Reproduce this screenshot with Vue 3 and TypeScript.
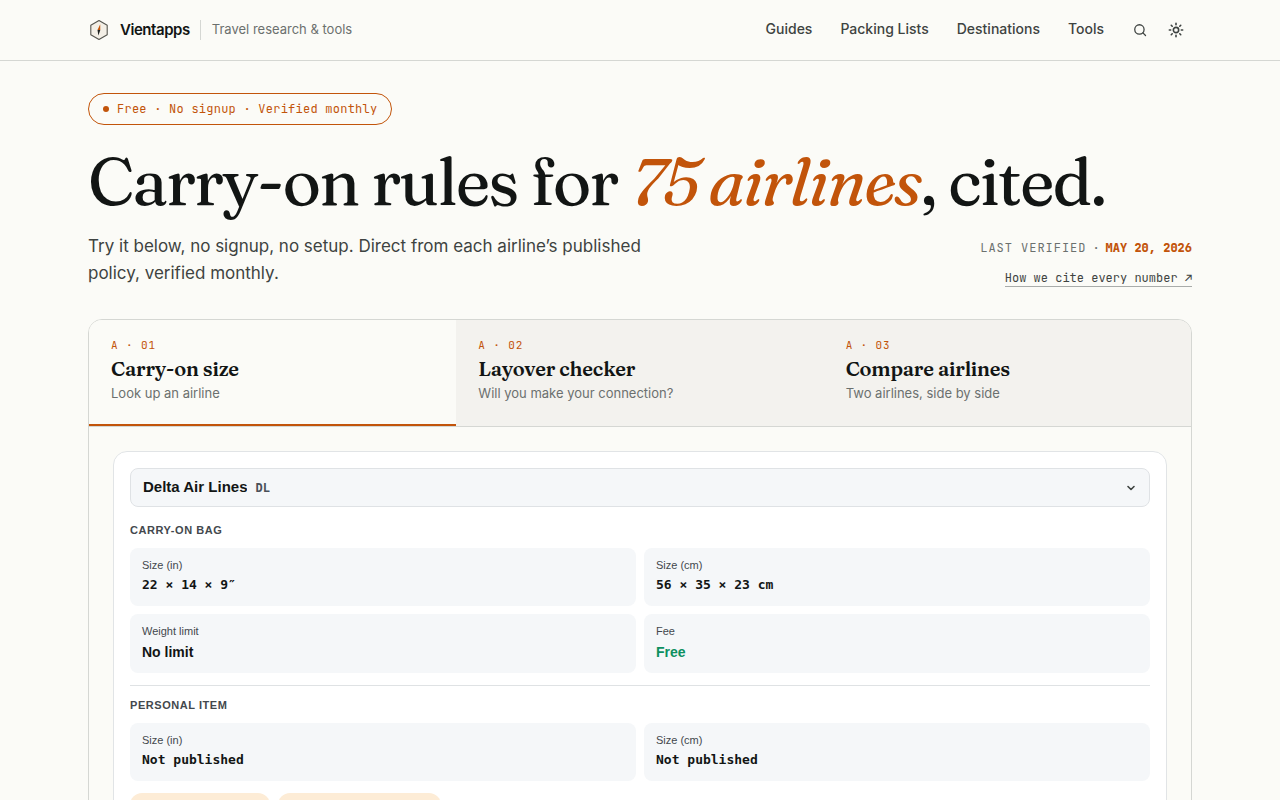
<script setup lang="ts">
import { ref } from 'vue'

interface Tab { id: string; index: string; title: string; hint: string }
interface Fact { label: string; value: string; kind: 'mono' | 'plain' | 'free' }
interface Section { title: string; facts: Fact[] }

const navLinks: string[] = ['Guides', 'Packing Lists', 'Destinations', 'Tools']

const tabs: Tab[] = [
  { id: 'size', index: 'A · 01', title: 'Carry-on size', hint: 'Look up an airline' },
  { id: 'layover', index: 'A · 02', title: 'Layover checker', hint: 'Will you make your connection?' },
  { id: 'compare', index: 'A · 03', title: 'Compare airlines', hint: 'Two airlines, side by side' },
]
const activeTab = ref<string>('size')
const airline = ref<string>('DL')

const sections: Section[] = [
  {
    title: 'Carry-on bag',
    facts: [
      { label: 'Size (in)', value: '22 × 14 × 9″', kind: 'mono' },
      { label: 'Size (cm)', value: '56 × 35 × 23 cm', kind: 'mono' },
      { label: 'Weight limit', value: 'No limit', kind: 'plain' },
      { label: 'Fee', value: 'Free', kind: 'free' },
    ],
  },
  {
    title: 'Personal item',
    facts: [
      { label: 'Size (in)', value: 'Not published', kind: 'mono' },
      { label: 'Size (cm)', value: 'Not published', kind: 'mono' },
    ],
  },
]
</script>

<template>
  <div class="page">
    <header class="site-header">
      <div class="container header-row">
        <a class="brand" href="#">
          <svg class="logo" viewBox="0 0 22 22" width="22" height="22" aria-hidden="true">
            <path d="M11 1.5 19.2 6.2v9.6L11 20.5 2.8 15.8V6.2z" fill="#f3efe6" stroke="#55554f" stroke-width="1.1" stroke-linejoin="round" />
            <path d="M12.2 5.2 12.3 11 9.5 11z" fill="#c2540a" />
            <path d="M9.5 11h2.8l-1.9 5.6z" fill="#1d211f" />
          </svg>
          <span class="brand-name">Vientapps</span>
        </a>
        <span class="tagline">Travel research &amp; tools</span>
        <nav class="nav">
          <a v-for="link in navLinks" :key="link" href="#">{{ link }}</a>
        </nav>
        <div class="tools">
          <button type="button" class="icon-button" aria-label="Search">
            <svg viewBox="0 0 24 24" width="14" height="14" fill="none" stroke="currentColor" stroke-width="2.2" stroke-linecap="round">
              <circle cx="11" cy="11" r="8" />
              <path d="m17 17 4.5 4.5" />
            </svg>
          </button>
          <button type="button" class="icon-button" aria-label="Toggle theme">
            <svg viewBox="0 0 24 24" width="16" height="16" fill="none" stroke="currentColor" stroke-width="2.4" stroke-linecap="round">
              <circle cx="12" cy="12" r="4" />
              <path d="M12 2v2M12 20v2M2 12h2M20 12h2M4.9 4.9l1.4 1.4M17.7 17.7l1.4 1.4M4.9 19.1l1.4-1.4M17.7 6.3l1.4-1.4" />
            </svg>
          </button>
        </div>
      </div>
    </header>

    <main class="container">
      <p class="pill"><span class="dot"></span>Free · No signup · Verified monthly</p>
      <h1>Carry-on rules for <em>75 airlines</em>, cited.</h1>
      <div class="intro">
        <p class="lede">Try it below, no signup, no setup. Direct from each airline’s published policy, verified monthly.</p>
        <div class="meta">
          <p class="verified"><span class="verified-label">Last verified</span><span>·</span><strong>May 20, 2026</strong></p>
          <a class="cite" href="#">How we cite every number ↗</a>
        </div>
      </div>

      <section class="card">
        <div class="tabs" role="tablist">
          <button
            v-for="tab in tabs"
            :key="tab.id"
            type="button"
            role="tab"
            class="tab"
            :class="{ active: tab.id === activeTab }"
            :aria-selected="tab.id === activeTab"
            @click="activeTab = tab.id"
          >
            <span class="tab-index">{{ tab.index }}</span>
            <span class="tab-title">{{ tab.title }}</span>
            <span class="tab-hint">{{ tab.hint }}</span>
          </button>
        </div>

        <div class="card-body">
          <div class="panel">
            <div class="picker">
              <select v-model="airline" aria-label="Airline">
                <option value="DL">Delta Air Lines</option>
              </select>
              <span class="code">{{ airline }}</span>
              <svg class="chevron" viewBox="0 0 12 12" width="12" height="12" fill="none" stroke="currentColor" stroke-width="1.6" stroke-linecap="round" stroke-linejoin="round" aria-hidden="true">
                <path d="m3 4.5 3 3 3-3" />
              </svg>
            </div>

            <section v-for="section in sections" :key="section.title" class="group">
              <h2>{{ section.title }}</h2>
              <dl class="facts">
                <div v-for="fact in section.facts" :key="fact.label" class="fact">
                  <dt>{{ fact.label }}</dt>
                  <dd :class="fact.kind">{{ fact.value }}</dd>
                </div>
              </dl>
            </section>

            <div class="chips" aria-hidden="true">
              <span class="chip"></span>
              <span class="chip chip-wide"></span>
            </div>
          </div>
        </div>
      </section>
    </main>
  </div>
</template>

<style>
body {
  margin: 0;
  background: #fbfbf7;
}
</style>

<style scoped>
.page {
  --ink: #121514;
  --soft: #3e4341;
  --muted: #6b706e;
  --accent: #c2540a;
  --line: #d5d7d3;
  --mono: 'JetBrains Mono', 'DejaVu Sans Mono', monospace;
  --serif: 'Fraunces', 'Liberation Serif', serif;
  min-height: 100vh;
  color: var(--ink);
  font-family: Inter, sans-serif;
}
.page *, .page *::before { box-sizing: border-box; }
p, h1, h2, dl, dd { margin: 0; }
a { color: inherit; text-decoration: none; }
button, select { font: inherit; color: inherit; }

.container {
  max-width: 1152px;
  margin: 0 auto;
  padding: 0 24px;
  box-sizing: border-box;
}
.site-header { border-bottom: 1px solid var(--line); }
.header-row { display: flex; align-items: center; height: 60px; }
.brand { display: flex; align-items: center; gap: 10px; }
.brand-name { font-size: 15px; line-height: 20px; padding-bottom: 1px; font-weight: 600; letter-spacing: -0.03em; }
.tagline {
  margin-left: 10px;
  padding-left: 11px;
  padding-bottom: 2px;
  border-left: 1px solid var(--line);
  font-size: 13px;
  line-height: 18px;
  color: var(--muted);
}
.nav {
  display: flex;
  gap: 28px;
  margin-left: auto;
  padding-bottom: 3px;
  font-size: 14px;
  line-height: 20px;
  font-weight: 500;
  color: var(--soft);
}
.tools { display: flex; margin: 0 -2px 0 18px; }
.icon-button {
  display: grid;
  place-items: center;
  width: 36px;
  height: 36px;
  padding: 0;
  border: 0;
  background: none;
  color: var(--soft);
}

.pill {
  display: flex;
  align-items: center;
  gap: 8px;
  width: fit-content;
  height: 32px;
  margin-top: 32px;
  padding: 0 14px;
  border: 1px solid var(--accent);
  border-radius: 16px;
  font: 12px/16px var(--mono);
  letter-spacing: 0.02em;
  color: var(--accent);
}
.dot { width: 6px; height: 6px; border-radius: 50%; background: var(--accent); }
h1 {
  margin-top: 18px;
  font: 500 66px/76px var(--serif);
  letter-spacing: -0.03em;
}
h1 em { color: var(--accent); font-weight: 400; }
.intro {
  display: flex;
  justify-content: space-between;
  gap: 32px;
  margin-top: 14px;
}
.lede { max-width: 580px; font-size: 17px; line-height: 27px; color: var(--soft); }
.meta { display: flex; flex-direction: column; align-items: flex-end; gap: 13px; padding-top: 6px; }
.verified { display: flex; gap: 6px; font: 12px/18px var(--mono); text-transform: uppercase; color: var(--muted); }
.verified-label { letter-spacing: 0.08em; }
.verified strong { color: var(--accent); font-weight: 800; }
.cite { border-bottom: 1px solid #a9acaa; font: 12px/16px var(--mono); color: var(--soft); }

.card { margin: 32px 0; border: 1px solid var(--line); border-radius: 14px; overflow: hidden; }
.tabs {
  display: grid;
  grid-template-columns: repeat(3, 1fr);
  background: #f3f2ee;
  border-bottom: 1px solid var(--line);
}
.tab {
  display: flex;
  flex-direction: column;
  align-items: flex-start;
  padding: 18px 22px 22px;
  border: 0;
  border-bottom: 2px solid transparent;
  background: none;
  text-align: left;
}
.tab.active { background: #fbfbf7; border-bottom-color: var(--accent); }
.tab-index { font: 11px/14px var(--mono); letter-spacing: 0.08em; color: var(--accent); }
.tab-title { margin-top: 4px; font: 600 20px/26px var(--serif); letter-spacing: -0.01em; }
.tab-hint { margin-top: 2px; font-size: 13px; line-height: 18px; color: var(--muted); }

.card-body { padding: 24px; }
.panel {
  padding: 16px;
  border: 1px solid #e1e4e6;
  border-radius: 14px;
  background: #fff;
  font-family: 'Liberation Sans', Arial, sans-serif;
}
.picker {
  display: flex;
  align-items: center;
  gap: 8px;
  height: 39px;
  padding: 0 12px;
  border: 1px solid #dfe2e5;
  border-radius: 8px;
  background: #f5f7f9;
}
.picker select {
  appearance: none;
  field-sizing: content;
  padding: 0 0 2px;
  border: 0;
  background: none;
  font-size: 15px;
  font-weight: 600;
}
.code { font: 600 12px/16px 'DejaVu Sans Mono', monospace; color: #4a5058; }
.chevron { margin-left: auto; color: var(--soft); }

.group h2 {
  font-size: 11px;
  line-height: 16px;
  font-weight: 600;
  letter-spacing: 0.05em;
  text-transform: uppercase;
  color: #43484d;
}
.group { padding-top: 15px; }
.group + .group { margin-top: 12px; border-top: 1px solid #dfe2e4; padding-top: 11px; }
.facts { display: grid; grid-template-columns: 1fr 1fr; gap: 8px; margin-top: 10px; }
.fact { min-height: 58px; padding: 10px 12px; border-radius: 8px; background: #f5f7f9; }
.fact dt { font-size: 11px; line-height: 15px; color: #43484d; }
.fact dd { margin-top: 3px; font-size: 14px; line-height: 21px; font-weight: 600; }
.fact .mono { font-family: 'DejaVu Sans Mono', monospace; font-size: 13px; line-height: 18px; }
.fact .free { color: #0d9060; }
.chips { display: flex; gap: 8px; margin-top: 12px; }
.chip { width: 140px; height: 24px; border-radius: 12px; background: #fdecd6; }
.chip-wide { width: 163px; }
</style>
